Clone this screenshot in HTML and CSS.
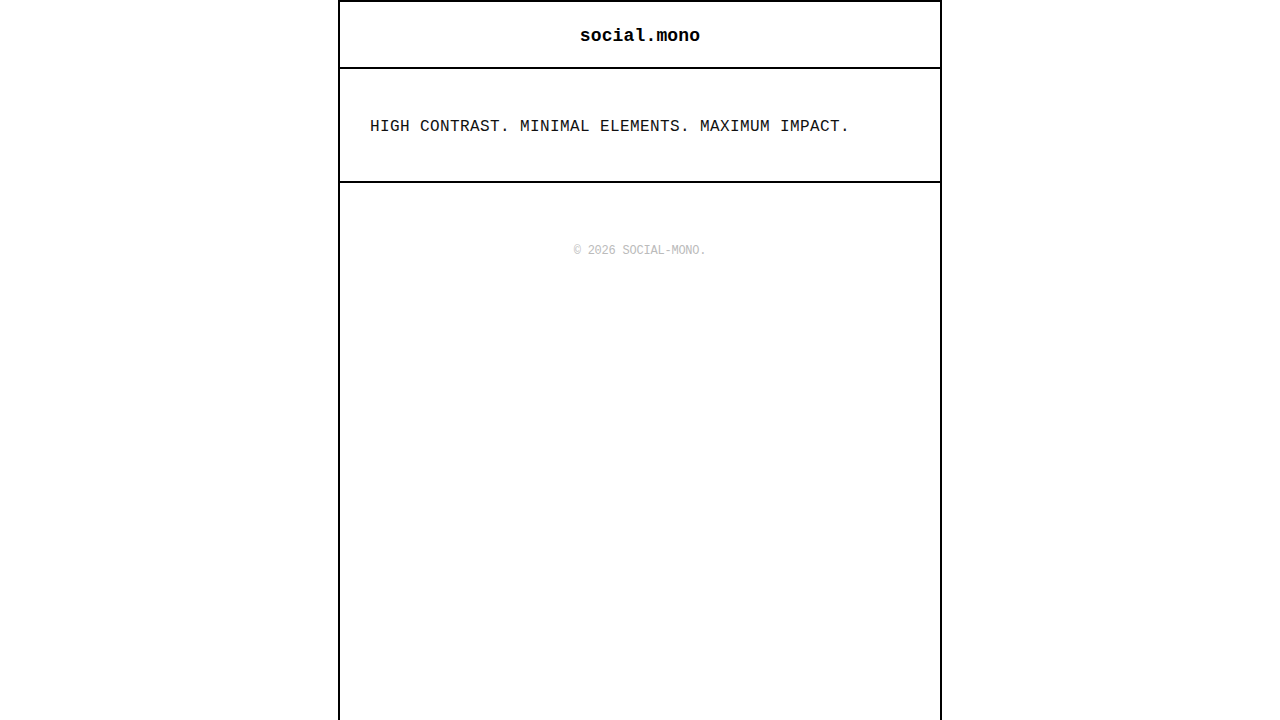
FILE: index.html
```html
<!DOCTYPE html>
<html lang="en">
<head>
<meta charset="utf-8">
<title>social.mono</title>
<link rel="stylesheet" href="styles.css">
</head>
<body>
<div class="frame">
  <header class="top">
    <h1 class="brand">social.mono</h1>
  </header>
  <section class="hero">
    <p class="tagline">HIGH CONTRAST. MINIMAL ELEMENTS. MAXIMUM IMPACT.</p>
  </section>
  <footer class="foot">
    <p class="copy">© 2026 SOCIAL-MONO.</p>
  </footer>
</div>
</body>
</html>
```
FILE: styles.css
```css
html, body {
  margin: 0;
  padding: 0;
  background: #fff;
  height: 100%;
}
body {
  font-family: "Liberation Mono", "Courier New", monospace;
  color: #000;
}
.frame {
  width: 604px;
  margin: 0 auto;
  border: 2px solid #000;
  border-bottom: none;
  min-height: 100%;
  box-sizing: border-box;
}
.top {
  height: 63px;
  padding-top: 2px;
  border-bottom: 2px solid #000;
  display: flex;
  align-items: center;
  justify-content: center;
}
.brand {
  margin: 0;
  font-size: 18px;
  font-weight: bold;
  letter-spacing: 0.15px;
}
.hero {
  height: 108px;
  padding: 4px 30px 0;
  border-bottom: 2px solid #000;
  display: flex;
  align-items: center;
}
.tagline {
  margin: 0;
  font-size: 16px;
  letter-spacing: 0.4px;
  color: #111;
}
.foot {
  padding-top: 61px;
  text-align: center;
}
.copy {
  margin: 0;
  font-size: 12px;
  letter-spacing: -0.22px;
  color: #bbb;
}
```
